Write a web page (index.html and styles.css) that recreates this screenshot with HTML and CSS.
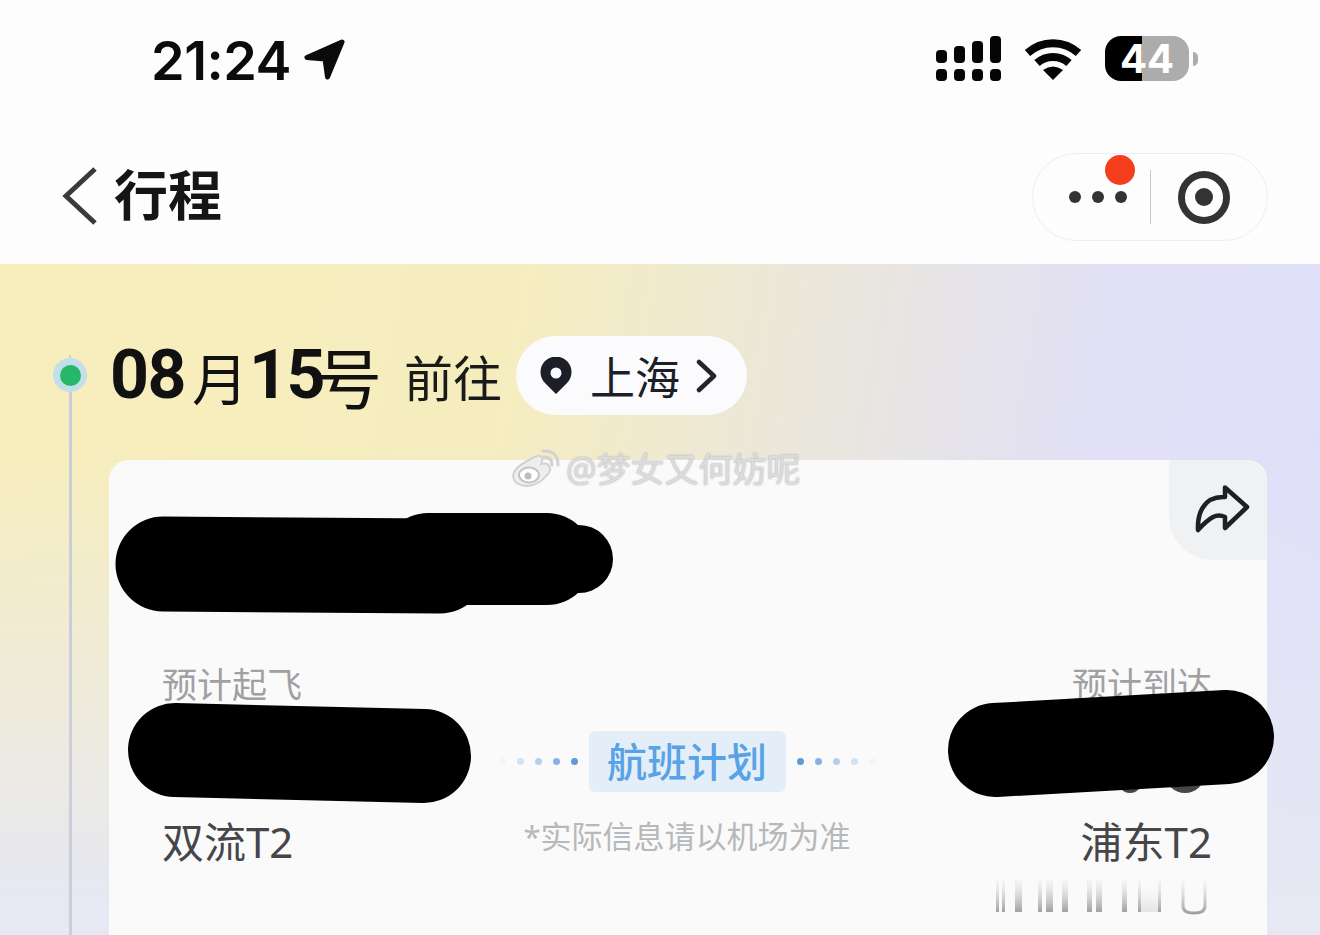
FILE: index.html
```html
<!DOCTYPE html>
<html lang="zh-CN">
<head>
    <meta charset="UTF-8">
    <meta name="viewport" content="width=device-width, initial-scale=1.0">
    <title>行程</title>
    <link rel="stylesheet" href="styles.css">
</head>
<body>

<div class="page">
    <div class="status-bar">
        <div class="clock">
            <span class="time-text">21:24</span>
            <svg class="loc-arrow" width="44" height="44" viewBox="0 0 44 44">
                <path d="M40 4 L5 19.500 L23 21 L25.500 39 Z" fill="#0b0b0b" stroke="#0b0b0b" stroke-width="5" stroke-linejoin="round"/>
            </svg>
        </div>
        <div class="status-icons">
            <svg width="66" height="46" viewBox="0 0 66 46" fill="#050505">
                <rect x="0" y="14" width="11" height="13" rx="4"/>
                <rect x="18" y="10" width="11" height="17" rx="4"/>
                <rect x="36" y="5" width="11" height="22" rx="4"/>
                <rect x="54" y="0" width="11" height="27" rx="4"/>
                <rect x="0" y="33" width="11" height="12" rx="4"/>
                <rect x="18" y="33" width="11" height="12" rx="4"/>
                <rect x="36" y="33" width="11" height="12" rx="4"/>
                <rect x="54" y="33" width="11" height="12" rx="4"/>
            </svg>
            <svg class="wifi" width="58" height="44" viewBox="0 0 58 44">
                <path d="M3.500 16 A38 38 0 0 1 54.500 16" fill="none" stroke="#050505" stroke-width="8"/>
                <path d="M13 26 A24 24 0 0 1 45 26" fill="none" stroke="#050505" stroke-width="8"/>
                <path d="M29 43 L19 33 Q29 26 39 33 Z" fill="#050505"/>
            </svg>
            <div class="battery">44</div>
            <div class="battery-nub"></div>
        </div>
    </div>

    <div class="nav-bar">
        <div class="nav-left">
            <svg width="36" height="58" viewBox="0 0 36 58">
                <path d="M33 2 L4 29 L33 56" fill="none" stroke="#3a3a3a" stroke-width="5"/>
            </svg>
            <span class="nav-title">行程</span>
        </div>
        <div class="capsule">
            <div class="more-btn">
                <span class="more-dot"></span>
                <span class="more-dot"></span>
                <span class="more-dot"></span>
                <span class="red-badge"></span>
            </div>
            <div class="capsule-line"></div>
            <div class="target-ring"><span class="target-core"></span></div>
        </div>
    </div>

    <div class="trip">
        <div class="timeline">
            <div class="timeline-stub"></div>
            <div class="timeline-dot"><span class="timeline-dot-in"></span></div>
            <div class="timeline-line"></div>
        </div>
        <div class="trip-body">
            <div class="date-row">
                <div class="date">
                    <span class="date-num">08</span><span class="date-cn">月</span><span class="date-num">15</span><span class="date-cn date-hao">号</span>
                </div>
                <span class="go-to">前往</span>
                <div class="city-pill">
                    <svg width="32" height="38" viewBox="0 0 32 38">
                        <path fill-rule="evenodd" d="M16 37 L5 26 A15.500 15.500 0 1 1 27 26 Z M16 10.500 A5.500 5.500 0 1 0 16 21.500 A5.500 5.500 0 1 0 16 10.500 Z" fill="#1c1f26"/>
                    </svg>
                    <span class="city-name">上海</span>
                    <svg width="22" height="34" viewBox="0 0 22 34">
                        <path d="M3 3 L18 17 L3 31" fill="none" stroke="#22252b" stroke-width="4.500" stroke-linecap="round" stroke-linejoin="round"/>
                    </svg>
                </div>
            </div>

            <div class="card">
                <div class="share-corner">
                    <svg width="56" height="50" viewBox="0 0 56 50">
                        <path d="M31 3.500 L53 23 L31 44 L31 33 Q25 30 19 33 Q12 37 4 46 Q3 25 16 16 Q23 12.500 31 13 Z" fill="none" stroke="#1e2024" stroke-width="4.500" stroke-linejoin="round"/>
                    </svg>
                </div>

                <div class="flight">
                    <div class="side">
                        <div class="side-label">预计起飞</div>
                        <div class="side-gap"></div>
                        <div class="terminal">双流T2</div>
                    </div>

                    <div class="middle">
                        <div class="plan-row">
                            <div class="dots">
                                <span class="dot dot-0"></span>
                                <span class="dot dot-1"></span>
                                <span class="dot dot-2"></span>
                                <span class="dot dot-3"></span>
                                <span class="dot dot-4"></span>
                            </div>
                            <div class="plan-tag">航班计划</div>
                            <div class="dots">
                                <span class="dot dot-4"></span>
                                <span class="dot dot-3"></span>
                                <span class="dot dot-2"></span>
                                <span class="dot dot-1"></span>
                                <span class="dot dot-0"></span>
                            </div>
                        </div>
                        <div class="plan-note">*实际信息请以机场为准</div>
                    </div>

                    <div class="side side-right">
                        <div class="side-label">预计到达</div>
                        <div class="side-gap"></div>
                        <div class="terminal">浦东T2</div>
                        <svg class="ghost-bars" width="217" height="38" viewBox="0 0 217 38">
                            <defs>
                                <linearGradient id="ghost" x1="0" y1="0" x2="0" y2="1">
                                    <stop offset="0" stop-color="#d8d8da" stop-opacity="0.1"/>
                                    <stop offset="1" stop-color="#a0a0a4"/>
                                </linearGradient>
                            </defs>
                            <g fill="url(#ghost)">
                                <rect x="1" y="2" width="3" height="33"/>
                                <rect x="7" y="2" width="3" height="33"/>
                                <rect x="20" y="2" width="7" height="33"/>
                                <rect x="43" y="2" width="4" height="33"/>
                                <rect x="51" y="2" width="7" height="33"/>
                                <rect x="67" y="2" width="6" height="33"/>
                                <rect x="92" y="2" width="5" height="33"/>
                                <rect x="101" y="2" width="6" height="33"/>
                                <rect x="127" y="2" width="5" height="33"/>
                                <rect x="143" y="2" width="3" height="33"/>
                                <rect x="146" y="10" width="17" height="25" opacity="0.25"/>
                                <rect x="163" y="2" width="3" height="33"/>
                            </g>
                            <path d="M188 2 V29 Q188 36 199 36 Q210 36 210 29 V2" fill="none" stroke="url(#ghost)" stroke-width="3"/>
                        </svg>
                    </div>
                </div>
            </div>
        </div>
    </div>

    <div class="watermark">
        <svg width="48" height="40" viewBox="0 0 48 40">
            <path d="M19 10 Q28 4 30 9 Q31 12 29 15 Q37 13 38 19 Q39 23 34 27 Q26 37 14 37 Q2 36 1 27 Q2 18 19 10 Z" fill="#eeeeee" stroke="#d2d2d2" stroke-width="2"/>
            <ellipse cx="17" cy="26" rx="10" ry="7.500" fill="#fff" stroke="#c4c4c4" stroke-width="2"/>
            <circle cx="16" cy="27" r="3.500" fill="#bcbcbc"/>
            <path d="M32 8 Q40 8 40 16 M31 2 Q46 1 46 16" fill="none" stroke="#d2d2d2" stroke-width="3" stroke-linecap="round"/>
        </svg>
        <span class="watermark-text">@梦女又何妨呢</span>
    </div>

    <!-- black scribbles over the private bits -->
    <svg class="scribbles" width="1320" height="935" viewBox="0 0 1320 935">
        <circle cx="1185" cy="773" r="20" fill="#45454a"/>
        <circle cx="1130" cy="781" r="12" fill="#45454a"/>
        <g fill="none" stroke="#000" stroke-linecap="round">
            <path d="M163 564 L440 566" stroke-width="95"/>
            <path d="M428 559 L547 559" stroke-width="92"/>
            <path d="M560 559 L579 559" stroke-width="68"/>
            <path d="M175 750 L424 756" stroke-width="94"/>
            <path d="M995 750 L1120 743 L1227 737" stroke-width="94" stroke-linejoin="round"/>
        </g>
    </svg>
</div>

</body>
</html>
```

FILE: styles.css
```css
* {
    box-sizing: border-box;
}

body {
    margin: 0;
    padding: 0;
    background-color: #fdfdfd;
    font-family: "Noto Sans", "Noto Sans CJK SC", sans-serif;
}

.page {
    position: relative;
    width: 1320px;
    height: 935px;
    overflow: hidden;
    display: flex;
    flex-direction: column;
}

/* status bar */
.status-bar {
    height: 120px;
    flex: none;
    display: flex;
    align-items: center;
    justify-content: space-between;
    padding: 0 122px 0 151px;
}

.clock {
    display: flex;
    align-items: center;
    gap: 11px;
}

.time-text {
    font-family: Inter, sans-serif;
    font-size: 54px;
    font-weight: 600;
    letter-spacing: -0.5px;
    color: #0b0b0b;
}

.status-icons {
    display: flex;
    align-items: center;
    margin-top: -3px;
}

.wifi {
    margin-left: 22px;
}

.battery {
    width: 84px;
    height: 45px;
    margin-left: 23px;
    border-radius: 16px;
    background: linear-gradient(to right, #000 44%, #acacac 44%);
    color: #fff;
    font-family: Inter, sans-serif;
    font-size: 40px;
    font-weight: 700;
    line-height: 45px;
    text-align: center;
}

.battery-nub {
    width: 5px;
    height: 14px;
    margin-left: 4px;
    border-radius: 0 6px 6px 0;
    background-color: #acacac;
}

/* nav */
.nav-bar {
    height: 144px;
    flex: none;
    display: flex;
    align-items: center;
    justify-content: space-between;
    padding: 0 52px 0 62px;
}

.nav-left {
    display: flex;
    align-items: center;
    gap: 16px;
    margin-top: 8px;
}

.nav-title {
    font-size: 54px;
    font-weight: 700;
    line-height: 60px;
    margin-top: -3px;
    color: #151515;
}

.capsule {
    width: 236px;
    height: 88px;
    margin-top: 10px;
    border: 1px solid #eeeeee;
    border-radius: 44px;
    display: flex;
    align-items: center;
    padding: 0 37px 0 36px;
}

.more-btn {
    position: relative;
    display: flex;
    gap: 11px;
    width: 82px;
}

.more-dot {
    width: 12px;
    height: 12px;
    border-radius: 50%;
    background-color: #333;
}

.red-badge {
    position: absolute;
    left: 36px;
    top: -36px;
    width: 30px;
    height: 30px;
    border-radius: 50%;
    background-color: #f53e1b;
}

.capsule-line {
    width: 1px;
    height: 54px;
    background-color: #c8c8c8;
}

.target-ring {
    width: 53px;
    height: 53px;
    margin-left: 27px;
    border: 7px solid #333;
    border-radius: 50%;
    display: flex;
    align-items: center;
    justify-content: center;
}

.target-core {
    width: 18px;
    height: 18px;
    border-radius: 50%;
    background-color: #333;
}

/* trip section */
.trip {
    flex: 1;
    display: flex;
    padding: 72px 53px 0 53px;
    gap: 22px;
    background:
        linear-gradient(to bottom, rgba(230, 232, 243, 0) 25%, #e6e8f3 90%),
        linear-gradient(100deg, #f8eebc 0%, #f6edbf 36%, #e9e6df 60%, #e1e0f6 78%, #dfdffb 100%);
}

.timeline {
    width: 34px;
    flex: none;
    display: flex;
    flex-direction: column;
    align-items: center;
    padding-top: 19px;
}

.timeline-stub {
    width: 2px;
    height: 3px;
    background-color: #c9ced8;
}

.timeline-dot {
    width: 34px;
    height: 34px;
    flex: none;
    border-radius: 50%;
    background-color: #c3dfec;
    display: flex;
    align-items: center;
    justify-content: center;
}

.timeline-dot-in {
    width: 21px;
    height: 21px;
    border-radius: 50%;
    background-color: #25b868;
}

.timeline-line {
    width: 3px;
    flex: 1;
    background-color: #c9ced8;
}

.trip-body {
    flex: 1;
    min-width: 0;
}

.date-row {
    height: 79px;
    display: flex;
    align-items: center;
    margin-left: 1px;
}

.date {
    display: flex;
    align-items: center;
    color: #111;
}

.date-num {
    font-family: Roboto, sans-serif;
    font-size: 68px;
    font-weight: 700;
    letter-spacing: -1.5px;
    line-height: 79px;
}

.date-cn {
    font-size: 56px;
    line-height: 79px;
    margin: 6px 1px 0 7px;
}

.date-hao {
    font-size: 66px;
    margin-left: -8px;
}

.go-to {
    margin-left: 21px;
    font-size: 49px;
    color: #1a1a1a;
}

.city-pill {
    height: 79px;
    width: 231px;
    margin-left: 14px;
    border-radius: 40px;
    background-color: #fbfbfd;
    display: flex;
    align-items: center;
    padding-left: 24px;
}

.city-name {
    margin: 0 16px 0 18px;
    font-size: 45px;
    color: #1c1f26;
}

.card {
    position: relative;
    height: 520px;
    margin-top: 45px;
    border-radius: 20px 20px 0 0;
    background-color: #fafafa;
    padding: 205px 55px 0 53px;
}

.share-corner {
    position: absolute;
    right: 0;
    top: 0;
    width: 98px;
    height: 100px;
    border-radius: 0 22px 0 44px;
    background-color: #eff1f2;
    padding: 24px 0 0 25px;
}

.flight {
    display: flex;
    justify-content: space-between;
}

.side {
    width: 217px;
    display: flex;
    flex-direction: column;
}

.side-right {
    align-items: flex-end;
}

.side-label {
    font-size: 35px;
    line-height: 40px;
    color: #a0a0a2;
}

.side-gap {
    height: 112px;
}

.terminal {
    font-size: 42px;
    line-height: 50px;
    color: #45454a;
}

.ghost-bars {
    margin-top: 10px;
}

.middle {
    margin-top: 66px;
    display: flex;
    flex-direction: column;
    align-items: center;
}

.plan-row {
    display: flex;
    align-items: center;
    gap: 11px;
}

.dots {
    display: flex;
    align-items: center;
    gap: 11px;
}

.dot {
    width: 7px;
    height: 7px;
    border-radius: 50%;
    background-color: #5d9bd6;
}

.dot-0 { opacity: 0.05; }
.dot-1 { opacity: 0.25; }
.dot-2 { opacity: 0.45; }
.dot-3 { opacity: 0.75; }
.dot-4 { opacity: 1; }

.plan-tag {
    width: 197px;
    height: 61px;
    border-radius: 6px;
    background-color: #e4eef9;
    color: #58a2e6;
    font-size: 40px;
    font-weight: 500;
    line-height: 61px;
    text-align: center;
}

.plan-note {
    margin-top: 23px;
    font-size: 31px;
    line-height: 42px;
    color: #b6b8bb;
}

/* overlays */
.watermark {
    position: absolute;
    left: 512px;
    top: 448px;
    display: flex;
    align-items: center;
    gap: 6px;
}

.watermark-text {
    font-size: 34px;
    line-height: 42px;
    color: #dcdcde;
    text-shadow: 0 0 2px #a4a4a4;
}

.scribbles {
    position: absolute;
    left: 0;
    top: 0;
}
```
